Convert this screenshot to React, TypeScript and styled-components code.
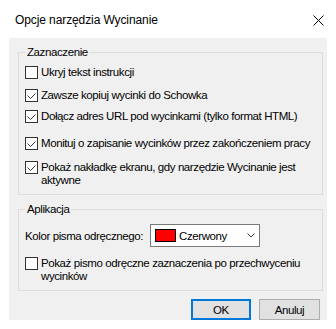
import React from "react";
import styled, { createGlobalStyle } from "styled-components";

const Global = createGlobalStyle`
  html, body { margin: 0; padding: 0; background: #ffffff; }
  body { font-family: "Liberation Sans", Arial, sans-serif; font-size: 11.5px; color: #000; letter-spacing: -0.4px; }
  * { box-sizing: border-box; }
`;

const Window = styled.div`
  width: 336px;
  height: 329px;
  background: #ffffff;
  display: flex;
  flex-direction: column;
  overflow: hidden;
`;

const TitleBar = styled.div`
  height: 38px;
  display: flex;
  align-items: center;
  justify-content: space-between;
  padding: 2px 12px 0 15px;
`;

const Title = styled.span`
  font-size: 12px;
  line-height: 14px;
  letter-spacing: -0.1px;
  color: #000;
`;

const Client = styled.div`
  margin-left: 9px;
  width: 318px;
  height: 282px;
  flex: none;
  background: #f0f0f0;
  padding: 7px 4px 0 9px;
  display: flex;
  flex-direction: column;
`;

const Group = styled.fieldset<{ $gapTop?: number }>`
  margin: ${(p) => p.$gapTop ?? 0}px 0 0 0;
  padding: 0 6px 7px 6px;
  border: 1px solid #dcdcdc;
  min-width: 0;
`;

const Legend = styled.legend`
  padding: 0 2px;
  font-size: 11.5px;
  line-height: 14px;
  height: 14px;
`;

const Row = styled.label<{ $top: number }>`
  display: flex;
  align-items: flex-start;
  margin-top: ${(p) => p.$top}px;
  line-height: 13px;
`;

const Box = styled.span`
  flex: none;
  width: 13px;
  height: 13px;
  border: 1px solid #333333;
  background: #ffffff;
  display: flex;
  margin-right: 3px;
`;

const LabelText = styled.span`
  line-height: 13px;
`;

const ColorRow = styled.div`
  display: flex;
  align-items: center;
  margin-top: 8px;
  height: 23px;
`;

const ColorLabel = styled.span`
  flex: none;
  width: 125px;
  white-space: nowrap;
`;

const Combo = styled.div`
  width: 110px;
  height: 23px;
  border: 1px solid #7a7a7a;
  background: #ffffff;
  display: flex;
  align-items: center;
  padding: 0 4px 0 4px;
`;

const Swatch = styled.span<{ $color: string }>`
  width: 21px;
  height: 13px;
  background: ${(p) => p.$color};
  border: 1px solid #000;
  margin-right: 3px;
`;

const ComboText = styled.span`
  flex: 1;
`;

const Buttons = styled.div`
  display: flex;
  justify-content: flex-end;
  gap: 8px;
  margin-top: 8px;
  padding-right: 3px;
`;

const Button = styled.button<{ $primary?: boolean; $w: number }>`
  width: ${(p) => p.$w}px;
  height: 21px;
  background: #e1e1e1;
  border: ${(p) => (p.$primary ? "2px solid #0078d7" : "1px solid #adadad")};
  font-family: "Liberation Sans", Arial, sans-serif;
  font-size: 11.5px;
  letter-spacing: -0.4px;
  color: #000;
  padding: 0;
  display: flex;
  align-items: center;
  justify-content: center;
`;

const Check = ({ checked }: { checked: boolean }) => (
  <Box>
    {checked && (
      <svg width="11" height="11" viewBox="0 0 11 11">
        <path d="M1.5 5.5 L4.5 8.5 L9.5 3.5" fill="none" stroke="#333" strokeWidth="1" />
      </svg>
    )}
  </Box>
);

const items: { text: string; checked: boolean; top: number }[] = [
  { text: "Ukryj tekst instrukcji", checked: false, top: 7 },
  { text: "Zawsze kopiuj wycinki do Schowka", checked: true, top: 10 },
  { text: "Dołącz adres URL pod wycinkami (tylko format HTML)", checked: true, top: 8 },
  { text: "Monituj o zapisanie wycinków przez zakończeniem pracy", checked: true, top: 14 },
  { text: "Pokaż nakładkę ekranu, gdy narzędzie Wycinanie jest aktywne", checked: true, top: 11 },
];

export default function App() {
  return (
    <Window>
      <Global />
      <TitleBar>
        <Title>Opcje narzędzia Wycinanie</Title>
        <svg width="11" height="11" viewBox="0 0 11 11">
          <path d="M0.5 0.5 L10.5 10.5 M10.5 0.5 L0.5 10.5" stroke="#000" strokeWidth="1" fill="none" />
        </svg>
      </TitleBar>
      <Client>
        <Group>
          <Legend>Zaznaczenie</Legend>
          {items.map((it) => (
            <Row key={it.text} $top={it.top}>
              <Check checked={it.checked} />
              <LabelText>{it.text}</LabelText>
            </Row>
          ))}
        </Group>
        <Group $gapTop={7}>
          <Legend>Aplikacja</Legend>
          <ColorRow>
            <ColorLabel>Kolor pisma odręcznego:</ColorLabel>
            <Combo>
              <Swatch $color="#ff0000" />
              <ComboText>Czerwony</ComboText>
              <svg width="8" height="5" viewBox="0 0 8 5">
                <path d="M0.5 0.5 L4 4 L7.5 0.5" fill="none" stroke="#333" strokeWidth="1" />
              </svg>
            </Combo>
          </ColorRow>
          <Row $top={10}>
            <Check checked={false} />
            <LabelText>Pokaż pismo odręczne zaznaczenia po przechwyceniu wycinków</LabelText>
          </Row>
        </Group>
        <Buttons>
          <Button $primary $w={60}>OK</Button>
          <Button $w={61}>Anuluj</Button>
        </Buttons>
      </Client>
    </Window>
  );
}
